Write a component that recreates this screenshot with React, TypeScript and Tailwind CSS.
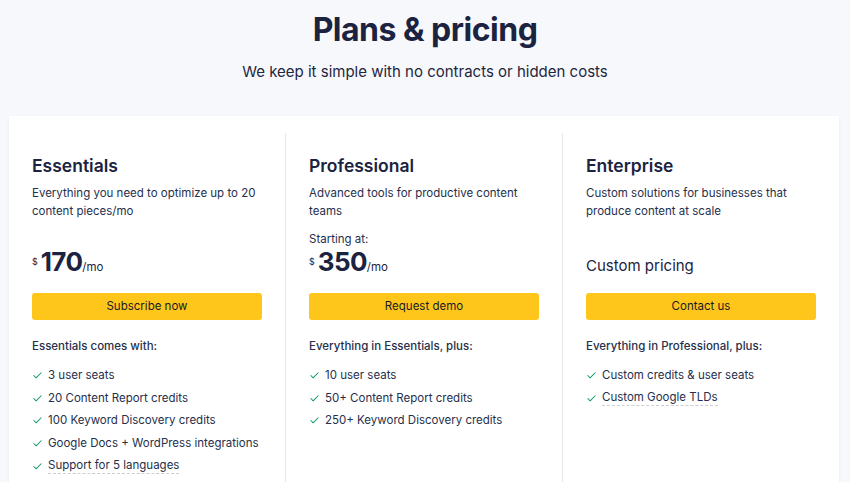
import { Check } from 'lucide-react';

type Plan = {
  name: string;
  desc: string;
  lead?: string;
  price?: string;
  custom?: string;
  cta: string;
  heading: string;
  items: { text: string; tip?: boolean }[];
};

const plans: Plan[] = [
  {
    name: 'Essentials',
    desc: 'Everything you need to optimize up to 20 content pieces/mo',
    price: '170',
    cta: 'Subscribe now',
    heading: 'Essentials comes with:',
    items: [
      { text: '3 user seats' },
      { text: '20 Content Report credits' },
      { text: '100 Keyword Discovery credits' },
      { text: 'Google Docs + WordPress integrations' },
      { text: 'Support for 5 languages', tip: true },
    ],
  },
  {
    name: 'Professional',
    desc: 'Advanced tools for productive content teams',
    lead: 'Starting at:',
    price: '350',
    cta: 'Request demo',
    heading: 'Everything in Essentials, plus:',
    items: [
      { text: '10 user seats' },
      { text: '50+ Content Report credits' },
      { text: '250+ Keyword Discovery credits' },
    ],
  },
  {
    name: 'Enterprise',
    desc: 'Custom solutions for businesses that produce content at scale',
    custom: 'Custom pricing',
    cta: 'Contact us',
    heading: 'Everything in Professional, plus:',
    items: [
      { text: 'Custom credits & user seats' },
      { text: 'Custom Google TLDs', tip: true },
    ],
  },
];

const PlanColumn = ({ plan, first }: { plan: Plan; first: boolean }) => {
  return (
    <div className={`flex-1 flex flex-col px-[23px] pt-[21px] pb-8 ${first ? '' : 'border-l border-[#e6e8ee]'}`}>
      <h2 className="text-[17.5px] leading-6 font-semibold text-[#1b2340]">{plan.name}</h2>
      <p className="mt-[6px] text-[11.5px] leading-[18px] text-[#262f4c]">{plan.desc}</p>
      <div className="h-[73px] flex flex-col justify-end pb-[17px]">
        {plan.lead && <p className="text-[11.5px] leading-[18px] text-[#262f4c]">{plan.lead}</p>}
        {plan.price && (
          <div className="flex items-baseline h-7 text-[#1b2340]">
            <span className="text-[9px] self-start mt-[7px] mr-[3px]">$</span>
            <span className="text-[26px] leading-7 font-bold tracking-tight">{plan.price}</span>
            <span className="text-[11.5px]">/mo</span>
          </div>
        )}
        {plan.custom && <p className="text-[15px] leading-6 text-[#1b2340] -mb-[2px]">{plan.custom}</p>}
      </div>
      <button className="h-[27px] w-full rounded-[3px] bg-[#fec61b] text-[11.5px] text-[#161a26]">{plan.cta}</button>
      <p className="mt-[17px] text-[11.5px] leading-[18px] font-medium text-[#262f4c]">{plan.heading}</p>
      <ul className="mt-[9px]">
        {plan.items.map((item) => (
          <li key={item.text} className="flex items-center h-[22.75px] text-[11.5px] text-[#262f4c]">
            <Check className="w-[11px] h-[11px] text-[#0f9a63] mr-[5px]" strokeWidth={2.25} />
            <span className={item.tip ? 'border-b border-dashed border-[#c9cdd6] leading-[15px]' : ''}>{item.text}</span>
          </li>
        ))}
      </ul>
    </div>
  );
};

export default function App() {
  return (
    <div className="min-h-[482px] bg-[#f7f8fc] font-['Inter',sans-serif] overflow-hidden">
      <div className="flex flex-col items-center pt-[9px]">
        <h1 className="text-[32px] leading-[42px] font-bold text-[#1b2340] tracking-[-0.5px]">Plans &amp; pricing</h1>
        <p className="mt-[9px] text-[15px] leading-6 text-[#1e2640]">We keep it simple with no contracts or hidden costs</p>
      </div>
      <div className="mt-[32px] ml-[9px] mr-[11px] bg-white shadow-[0_1px_3px_rgba(20,30,60,0.06)] pt-[17px] flex">
        {plans.map((p, i) => (
          <PlanColumn key={p.name} plan={p} first={i === 0} />
        ))}
      </div>
    </div>
  );
}
